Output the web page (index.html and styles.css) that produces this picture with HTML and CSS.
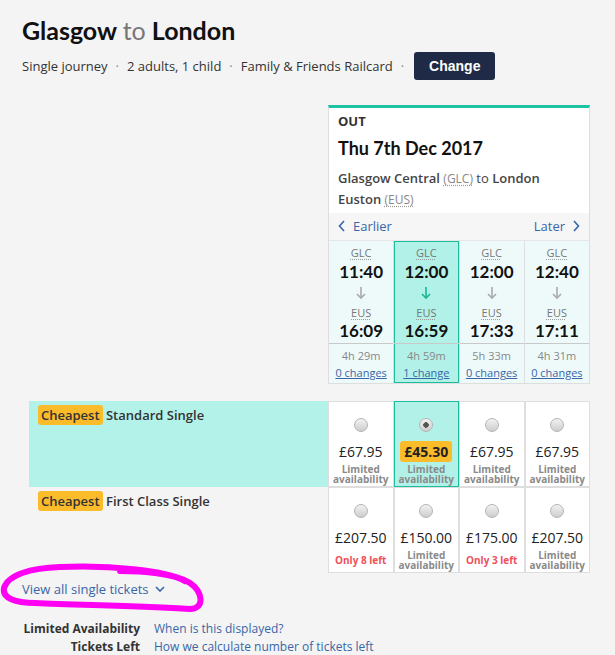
FILE: index.html
```html
<!DOCTYPE html>
<html lang="en">
<head>
    <meta charset="UTF-8">
    <meta name="viewport" content="width=device-width, initial-scale=1.0">
    <title>Glasgow to London - Single journey</title>
    <link rel="stylesheet" href="styles.css">
</head>
<body>
    <div class="page">
        <header class="trip">
            <h1 class="route">Glasgow <span class="to">to</span> London</h1>
            <div class="summary">
                <span>Single journey</span>
                <span class="dot">&middot;</span>
                <span>2 adults, 1 child</span>
                <span class="dot">&middot;</span>
                <span>Family &amp; Friends Railcard</span>
                <span class="dot">&middot;</span>
                <button class="btn-change">Change</button>
            </div>
        </header>

        <div class="journey">
            <div class="journey-card">
                <div class="card-head">
                    <div class="dir">OUT</div>
                    <div class="date">Thu 7th Dec 2017</div>
                    <div class="stations">
                        <b>Glasgow Central</b> <abbr>(GLC)</abbr> to <b>London Euston</b> <abbr>(EUS)</abbr>
                    </div>
                </div>
                <div class="card-nav">
                    <a href="#">
                        <svg width="8" height="12" viewBox="0 0 8 12"><polyline points="6,1 1.5,6 6,11" /></svg>
                        Earlier
                    </a>
                    <a href="#">
                        Later
                        <svg width="8" height="12" viewBox="0 0 8 12"><polyline points="2,1 6.5,6 2,11" /></svg>
                    </a>
                </div>
                <div class="times">
                    <div class="time-col">
                        <div class="leg">
                            <abbr class="from">GLC</abbr>
                            <div class="clock dep">11:40</div>
                            <svg class="arrow" width="10" height="14" viewBox="0 0 10 14"><line x1="5" y1="1" x2="5" y2="12" /><polyline points="1,8 5,12 9,8" /></svg>
                            <abbr class="dest">EUS</abbr>
                            <div class="clock arr">16:09</div>
                        </div>
                        <div class="leg-info">
                            <div class="duration">4h 29m</div>
                            <a href="#">0 changes</a>
                        </div>
                    </div>
                    <div class="time-col selected">
                        <div class="leg">
                            <abbr class="from">GLC</abbr>
                            <div class="clock dep">12:00</div>
                            <svg class="arrow" width="10" height="14" viewBox="0 0 10 14"><line x1="5" y1="1" x2="5" y2="12" /><polyline points="1,8 5,12 9,8" /></svg>
                            <abbr class="dest">EUS</abbr>
                            <div class="clock arr">16:59</div>
                        </div>
                        <div class="leg-info">
                            <div class="duration">4h 59m</div>
                            <a href="#">1 change</a>
                        </div>
                    </div>
                    <div class="time-col">
                        <div class="leg">
                            <abbr class="from">GLC</abbr>
                            <div class="clock dep">12:00</div>
                            <svg class="arrow" width="10" height="14" viewBox="0 0 10 14"><line x1="5" y1="1" x2="5" y2="12" /><polyline points="1,8 5,12 9,8" /></svg>
                            <abbr class="dest">EUS</abbr>
                            <div class="clock arr">17:33</div>
                        </div>
                        <div class="leg-info">
                            <div class="duration">5h 33m</div>
                            <a href="#">0 changes</a>
                        </div>
                    </div>
                    <div class="time-col">
                        <div class="leg">
                            <abbr class="from">GLC</abbr>
                            <div class="clock dep">12:40</div>
                            <svg class="arrow" width="10" height="14" viewBox="0 0 10 14"><line x1="5" y1="1" x2="5" y2="12" /><polyline points="1,8 5,12 9,8" /></svg>
                            <abbr class="dest">EUS</abbr>
                            <div class="clock arr">17:11</div>
                        </div>
                        <div class="leg-info">
                            <div class="duration">4h 31m</div>
                            <a href="#">0 changes</a>
                        </div>
                    </div>
                </div>
            </div>
        </div>

        <div class="fares">
            <div class="fare-row highlight">
                <div class="fare-label"><span class="badge">Cheapest</span> Standard Single</div>
                <div class="fare-cell">
                    <span class="radio"></span>
                    <div class="price">&pound;67.95</div>
                    <div class="avail">Limited availability</div>
                </div>
                <div class="fare-cell selected">
                    <span class="radio checked"></span>
                    <div class="price"><span class="best">&pound;45.30</span></div>
                    <div class="avail">Limited availability</div>
                </div>
                <div class="fare-cell">
                    <span class="radio"></span>
                    <div class="price">&pound;67.95</div>
                    <div class="avail">Limited availability</div>
                </div>
                <div class="fare-cell">
                    <span class="radio"></span>
                    <div class="price">&pound;67.95</div>
                    <div class="avail">Limited availability</div>
                </div>
            </div>
            <div class="fare-row">
                <div class="fare-label"><span class="badge">Cheapest</span> First Class Single</div>
                <div class="fare-cell">
                    <span class="radio"></span>
                    <div class="price">&pound;207.50</div>
                    <div class="avail few">Only 8 left</div>
                </div>
                <div class="fare-cell">
                    <span class="radio"></span>
                    <div class="price">&pound;150.00</div>
                    <div class="avail">Limited availability</div>
                </div>
                <div class="fare-cell">
                    <span class="radio"></span>
                    <div class="price">&pound;175.00</div>
                    <div class="avail few">Only 3 left</div>
                </div>
                <div class="fare-cell">
                    <span class="radio"></span>
                    <div class="price">&pound;207.50</div>
                    <div class="avail">Limited availability</div>
                </div>
            </div>
        </div>

        <a href="#" class="view-all">
            View all single tickets
            <svg width="10" height="6" viewBox="0 0 10 6"><polyline points="1,1 5,5 9,1" /></svg>
        </a>

        <dl class="legend">
            <dt>Limited Availability</dt>
            <dd><a href="#">When is this displayed?</a></dd>
            <dt>Tickets Left</dt>
            <dd><a href="#">How we calculate number of tickets left</a></dd>
        </dl>

        <!-- marcação feita à mão por cima da captura -->
        <svg class="scribble" width="215" height="60" viewBox="0 0 215 60">
            <path d="M185 21 C165 10, 110 5, 60 7 C30 8, 8 15, 4 28 C2 38, 15 43, 35 43 C80 45, 140 46, 190 49 C205 49, 203 32, 190 23 C175 13, 140 11, 120 11" />
        </svg>
    </div>
</body>
</html>
```

FILE: styles.css
```css
body {
    margin: 0;
    background-color: #f4f4f4;
    font-family: "Open Sans", "DejaVu Sans", sans-serif;
    color: #333;
}
a {
    color: #3766a8;
}
abbr {
    text-decoration: underline dotted #999;
    text-underline-offset: 2px;
}
.page {
    position: relative;
    padding: 15px 25px 0 22px;
}
.route {
    margin: 0;
    font: 700 25px/30px Lato, sans-serif;
    color: #111;
}
.route .to {
    font-weight: 400;
    color: #777;
}
.summary {
    display: flex;
    align-items: center;
    margin-top: 7px;
    font-size: 13px;
}
.dot {
    margin: 0 8px;
    color: #888;
}
.btn-change {
    margin-left: 2px;
    height: 28px;
    padding: 0 15px;
    background-color: #1f2b46;
    color: white;
    border: none;
    border-radius: 3px;
    font: 700 14px "Liberation Sans", Arial, sans-serif;
}

/* cartão da viagem */
.journey {
    display: grid;
    grid-template-columns: 1fr 262px;
    margin-top: 25px;
}
.journey-card {
    grid-column: 2;
    background-color: white;
    border: 1px solid #dedede;
    border-top: 3px solid #1ec3a4;
}
.card-head {
    padding: 5px 30px 3px 9px;
}
.dir {
    font-size: 13px;
    font-weight: 700;
    line-height: 16px;
    color: #333;
}
.date {
    margin-top: 8px;
    font: 700 18px/22px Lato, sans-serif;
    color: #111;
}
.stations {
    margin-top: 9px;
    font-size: 13px;
    line-height: 20px;
    color: #444;
}
.stations b {
    font-weight: 600;
}
.stations abbr {
    color: #888;
    font-size: 12px;
}
.card-nav {
    display: flex;
    justify-content: space-between;
    align-items: center;
    height: 25px;
    padding: 0 9px 2px;
    background-color: #f6f6f6;
    font-size: 13px;
}
.card-nav a {
    display: flex;
    align-items: center;
    gap: 7px;
    text-decoration: none;
}
.card-nav svg polyline {
    fill: none;
    stroke: #3766a8;
    stroke-width: 1.6;
}
.times {
    display: grid;
    grid-template-columns: repeat(4, 1fr);
    gap: 1px;
    background-color: #dedede;
    border-top: 1px solid #e6e6e6;
}
.time-col {
    background-color: #eefafa;
    text-align: center;
}
.time-col.selected {
    background-color: #b2f1e7;
    box-shadow: inset 0 0 0 1px #1cbc9c;
}
.leg {
    display: flex;
    flex-direction: column;
    align-items: center;
    padding: 4px 0 2px;
    border-bottom: 1px solid #c9c9c9;
}
.leg abbr {
    font-size: 11px;
    line-height: 15px;
    color: #777;
}
.clock {
    font: 700 17px/22px Lato, sans-serif;
    color: #111;
}
.clock.dep {
    margin-top: 1px;
}
.clock.arr {
    line-height: 20px;
    margin-top: 1px;
}
.arrow {
    margin: 3px 0 5px;
}
.arrow line,
.arrow polyline {
    fill: none;
    stroke: #aaa;
    stroke-width: 1.6;
}
.selected .arrow line,
.selected .arrow polyline {
    stroke: #17b796;
}
.leg-info {
    padding: 4px 0 1px;
    font-size: 11px;
}
.duration {
    line-height: 16px;
    color: #888;
}
.leg-info a {
    display: inline-block;
    line-height: 18px;
}

/* tarifas */
.fares {
    margin: 17px 0 0 7px;
}
.fare-row {
    display: grid;
    grid-template-columns: 299px repeat(4, 1fr);
}
.fare-row.highlight .fare-label {
    background-color: #b3f2e9;
}
.fare-label {
    padding: 4px 9px;
    font-size: 13px;
    font-weight: 600;
    line-height: 20px;
    color: #333;
}
.badge {
    display: inline-block;
    padding: 0 3px;
    background-color: #fbbc2b;
    border-radius: 3px;
}
.fare-cell {
    display: flex;
    flex-direction: column;
    align-items: center;
    padding-top: 16px;
    background-color: white;
    border: 1px solid #dedede;
}
.fare-cell.selected {
    background-color: #b2f1e7;
    border-color: #1cbc9c;
}
.radio {
    width: 12px;
    height: 12px;
    border: 1px solid #b5b5b5;
    border-radius: 50%;
    background: linear-gradient(#f2f2f2, #cdcdcd);
}
.radio.checked {
    background: radial-gradient(circle, #555 0 2.5px, transparent 3px), linear-gradient(#f2f2f2, #cdcdcd);
}
.price {
    margin-top: 8px;
    height: 22px;
    display: flex;
    align-items: center;
    font-size: 14px;
    color: #222;
}
.best {
    padding: 1px 4px;
    background-color: #fbbc2b;
    border-radius: 3px;
    font-weight: 700;
}
.avail {
    display: flex;
    align-items: center;
    height: 22px;
    margin: 1px 0 1px;
    font-size: 10px;
    font-weight: 700;
    line-height: 10px;
    color: #8a8a8a;
    text-align: center;
}
.avail.few {
    color: #f0505a;
}

.view-all {
    display: inline-flex;
    align-items: center;
    gap: 6px;
    margin-top: 6px;
    font-size: 13px;
    line-height: 20px;
    text-decoration: none;
}
.view-all svg polyline {
    fill: none;
    stroke: #3766a8;
    stroke-width: 1.6;
}
.legend {
    display: grid;
    grid-template-columns: 118px auto;
    column-gap: 14px;
    margin: 21px 0 0;
    font-size: 12px;
    line-height: 18px;
}
.legend dt {
    font-weight: 700;
    text-align: right;
    color: #333;
}
.legend dd {
    margin: 0;
}
.legend a {
    text-decoration: none;
}
.scribble {
    position: absolute;
    left: 0;
    top: 560px;
}
.scribble path {
    fill: none;
    stroke: #ff00f5;
    stroke-width: 6;
    stroke-linecap: round;
}
```
